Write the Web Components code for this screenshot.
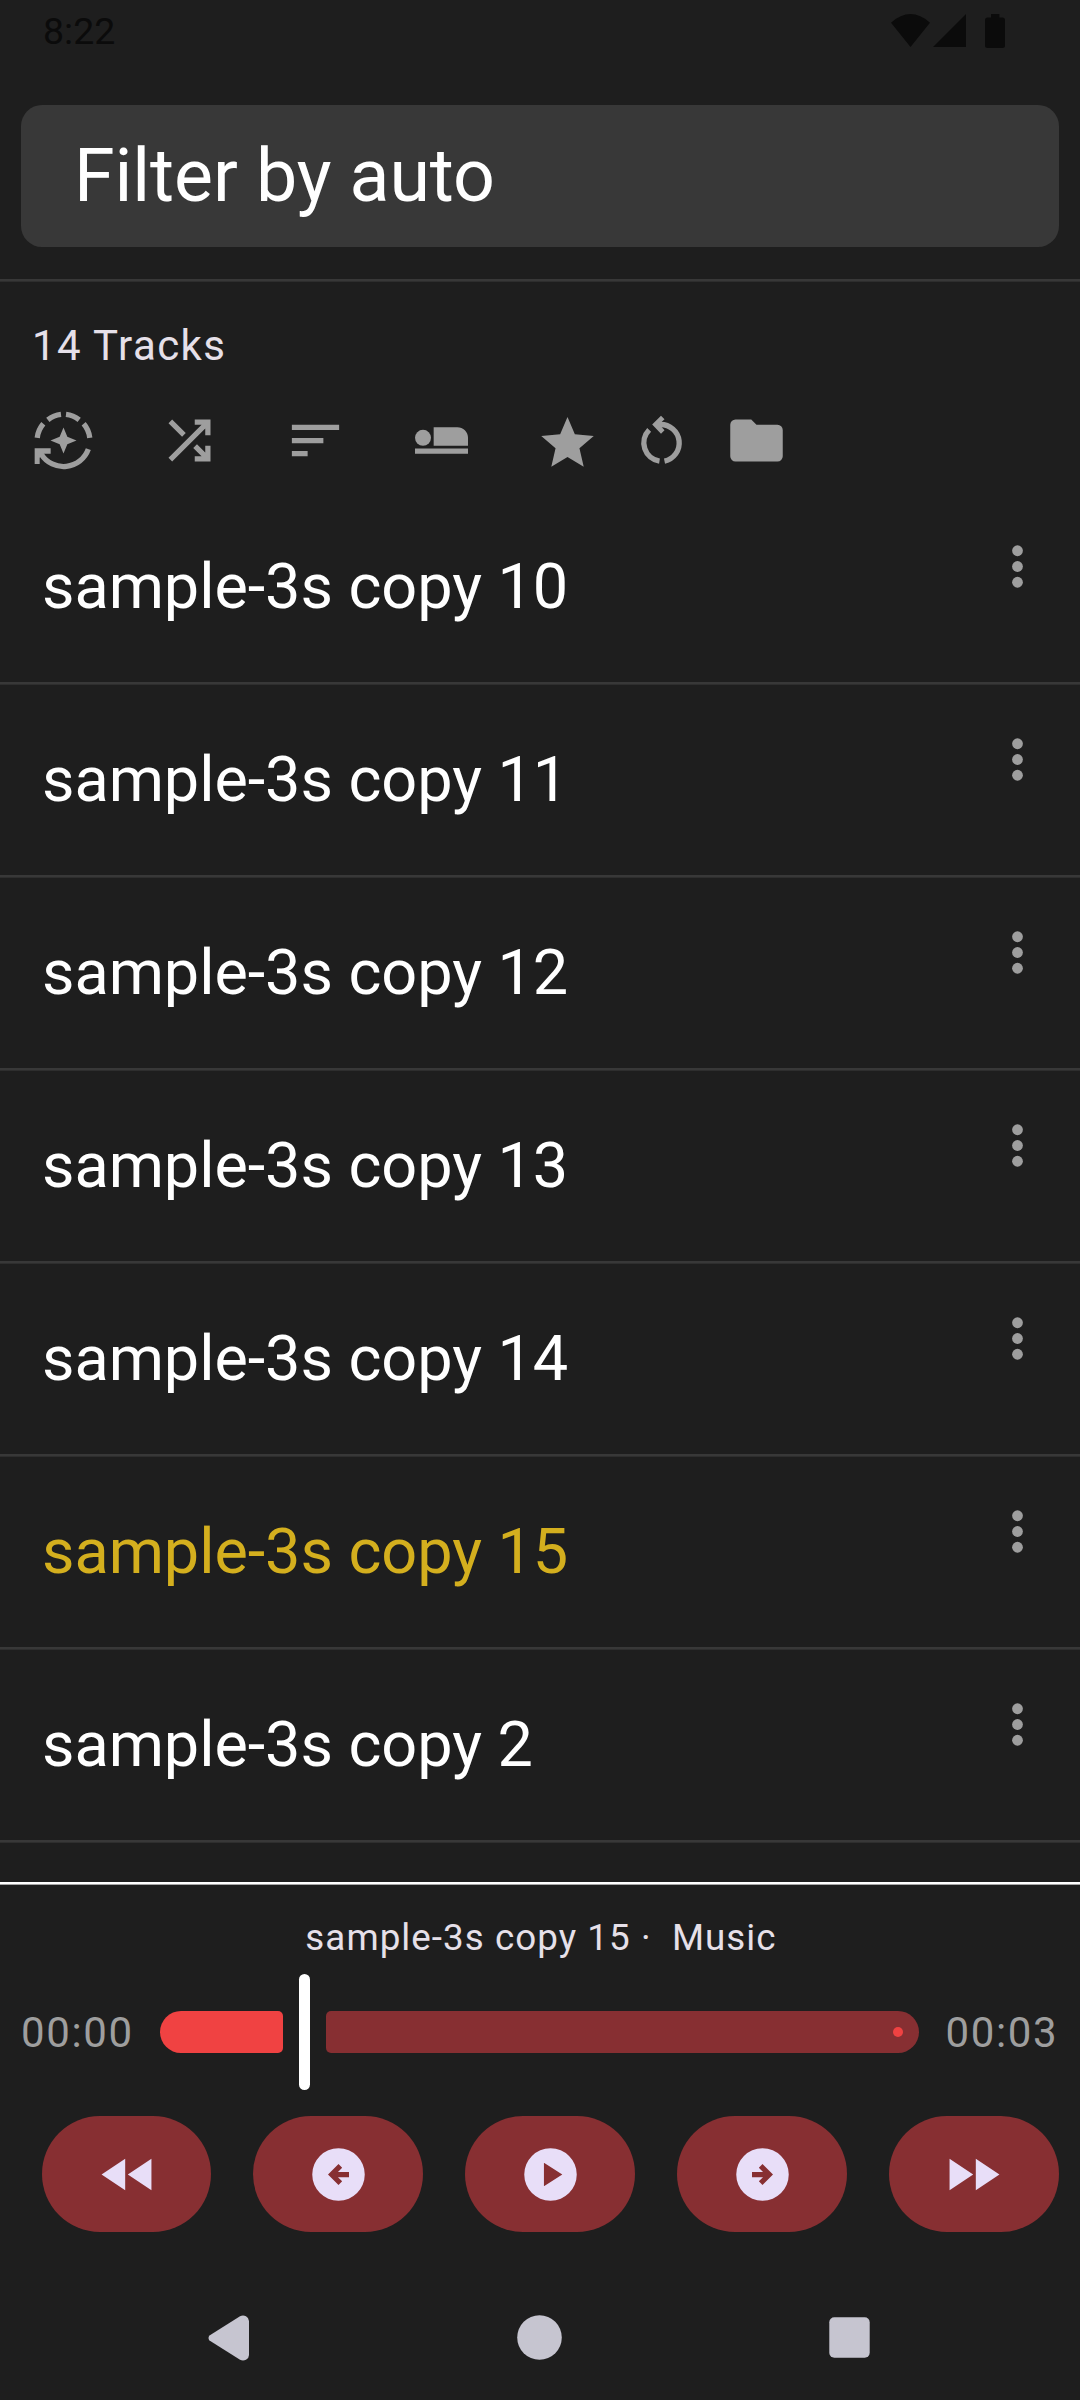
<!DOCTYPE html>
<html lang="en">
<head>
<meta charset="utf-8">
<title>Tracks</title>
<style>
html,body{margin:0;padding:0;background:#1e1e1e}
body{font-family:Roboto,sans-serif;color:#fff}
</style>
</head>
<body>
<music-app></music-app>
<script>
const define=(name,html,setup)=>{
  const t=document.createElement('template');
  t.innerHTML=html;
  customElements.define(name,class extends HTMLElement{
    constructor(){
      super();
      this.attachShadow({mode:'open'}).append(t.content.cloneNode(true));
    }
    connectedCallback(){ if(setup) setup(this,this.shadowRoot); }
  });
};

const S='0 -960 960 960';
const DISC='M480-80q-83 0-156-31.5T197-197q-54-54-85.5-127T80-480q0-83 31.5-156T197-763q54-54 127-85.5T480-880q83 0 156 31.5T763-763q54 54 85.5 127T880-480q0 83-31.5 156T763-197q-54 54-127 85.5T480-80Z';
const ICONS={
  auto:['96 327 189 189','<g fill="none" stroke="currentColor" stroke-width="16"><path d="M183 343.3A78.5 78.5 0 0 0 143.500 359.500M130 371.500A78.500 78.500 0 0 0 111.700 413.500M198 343.300A78.500 78.500 0 0 1 237.500 359.500M251 371.500A78.500 78.500 0 0 1 269.300 413.500M265 447.500A79 79 0 0 1 124 463"/></g><path d="M104 445H152V461H131L119 473V492H104ZM190.500 382.500 202 410 229.500 421.500 202 433 190.500 460.500 179 433 151.500 421.500 179 410Z"/>'],
  shuffle:[S,'<path d="M560-160v-80h104L537-367l57-57 126 126v-102h80v240H560Zm-344 0-56-56 504-504H560v-80h240v240h-80v-104L216-160Zm151-377L160-744l56-56 207 207-56 56Z"/>'],
  sort:[S,'<path d="M120-240v-80h240v80H120Zm0-200v-80h480v80H120Zm0-200v-80h720v80H120Z"/>'],
  bed:['30 87 189 189','<circle cx="69" cy="173.500" r="24"/><path d="M101 141.500H172A32 32 0 0 1 204 173.500V197.500H101ZM45 205.500H204V221H45Z"/>'],
  star:['0 -1000 960 960','<path d="m233-120 65-281L80-590l288-25 112-265 112 265 288 25-218 189 65 281-247-149-247 149Z"/>'],
  reset:['691.5 87 189 189','<g fill="none" stroke="currentColor" stroke-width="16"><path d="M777 243.300A55.500 55.500 0 0 1 746 149.500M792 243.300A55.500 55.500 0 0 0 779 133.500"/></g><path d="M755 133.500 781.500 107 792 118 784 125.500V141.500L792 150.500 781.500 161.500Z"/>'],
  folder:[S,'<path d="M160-160q-33 0-56.5-23.5T80-240v-480q0-33 23.5-56.5T160-800h240l80 80h320q33 0 56.5 23.5T880-640v400q0 33-23.5 56.5T800-160H160Z"/>'],
  more:[S,'<circle cx="480" cy="-240" r="82"/><circle cx="480" cy="-480" r="82"/><circle cx="480" cy="-720" r="82"/>'],
  rewind:[S,'<path d="M860-240 500-480l360-240v480Zm-400 0L100-480l360-240v480Z"/>'],
  forward:[S,'<path d="M100-240v-480l360 240-360 240Zm400 0v-480l360 240-360 240Z"/>'],
  prev:[S,'<path fill-rule="evenodd" d="'+DISC+'M480-320l56-56-64-64h168v-80H472l64-64-56-56-160 160 160 160Z"/>'],
  next:[S,'<path fill-rule="evenodd" d="'+DISC+'M480-320l160-160-160-160-56 56 64 64H320v80h168l-64 64 56 56Z"/>'],
  play:[S,'<path fill-rule="evenodd" d="'+DISC+'M380-300l280-180-280-180v360Z"/>']
};

define('app-icon',`<style>:host{display:block;width:63px;height:63px;flex:none}svg{display:block;width:100%;height:100%;fill:currentColor}</style><svg></svg>`,(el,root)=>{
  const [box,body]=ICONS[el.getAttribute('name')];
  const svg=root.querySelector('svg');
  svg.setAttribute('viewBox',box);
  svg.innerHTML=body;
});

define('app-divider',`<style>:host{display:block;height:3px;flex:none;background:linear-gradient(var(--line,#383838) 0 2px,var(--line-edge,#2e2e2e) 2px 3px)}</style>`);

define('status-bar',`<style>
:host{display:flex;justify-content:space-between;height:105px;box-sizing:border-box;padding:9px 75px 0 43px;color:#0b0b0b;flex:none}
time{font-size:37.5px;line-height:45px}
svg{display:block;margin-top:5px;fill:currentColor}
</style><time>8:22</time>
<svg width="114" height="34" viewBox="891 14 114 34"><path d="M891 22.700Q910.500 5.500 930 22.700L910.500 47ZM966 14V47H933ZM991 14H999.400V17.500H1002.500Q1005 17.500 1005 20V45.500Q1005 48 1002.500 48H987.500Q985 48 985 45.500V20Q985 17.500 987.500 17.500H991Z"/></svg>`);

define('search-field',`<style>
:host{display:flex;align-items:center;height:142px;margin:0 21px;padding-left:53px;border-radius:21px;background:#383838;font-size:73.5px;line-height:86px;letter-spacing:-.09px;box-sizing:border-box;flex:none}
</style><slot></slot>`);

define('icon-toolbar',`<style>
:host{display:flex;padding-left:32px;gap:63px;color:#9e9e9e;flex:none}
div{display:flex;gap:31.5px}
</style><app-icon name="auto"></app-icon><app-icon name="shuffle"></app-icon><app-icon name="sort"></app-icon><app-icon name="bed"></app-icon><div><app-icon name="star"></app-icon><app-icon name="reset"></app-icon><app-icon name="folder"></app-icon></div>`);

define('track-row',`<style>
:host{display:block;flex:none}
:host([active]) .name{color:#d4af1e}
.row{display:flex;height:190px;justify-content:space-between;box-sizing:border-box;padding:0 31px 0 42px}
.name{font-size:63px;line-height:189px;letter-spacing:-.07px;color:#fff}
app-icon{margin-top:43px;color:#9e9e9e}
</style><div class="row"><span class="name"><slot></slot></span><app-icon name="more"></app-icon></div><app-divider></app-divider>`);

define('seek-bar',`<style>
:host{display:flex;align-items:center;height:116px;flex:none;padding:0 21px;justify-content:space-between;color:#9e9e9e;font-size:42px;line-height:50px;letter-spacing:1.6px}
span{width:113.5px;padding-top:2px}
.track{display:flex;align-items:center;width:759px;margin:0 auto 0 25.5px}
.done{width:123px;height:42px;background:#f04242;border-radius:21px 5px 5px 21px}
.thumb{width:11px;height:116px;margin:0 15.500px 0 16px;background:#fff;border-radius:5.5px}
.rest{display:flex;flex:1;align-items:center;justify-content:flex-end;height:42px;padding-right:16px;box-sizing:border-box;background:#872f32;border-radius:5px 21px 21px 5px}
.stop{width:10.5px;height:10.5px;border-radius:50%;background:#f04242}
</style><span><slot name="elapsed"></slot></span><div class="track"><div class="done"></div><div class="thumb"></div><div class="rest"><div class="stop"></div></div></div><span><slot name="total"></slot></span>`);

define('pill-button',`<style>
:host{display:flex;flex:1;height:116px;align-items:center;justify-content:center;border-radius:58px;background:#872f32;color:#e8def8}
</style><slot></slot>`);

define('player-panel',`<style>
:host{display:flex;flex-direction:column;flex:none;height:388px}
app-divider{--line:#fff;--line-edge:#a5a5a5}
.title{font-size:36.75px;line-height:44px;letter-spacing:1.05px;color:#e6e0e9;text-align:center;white-space:pre;padding:31px 0 0 2px;height:58px}
.controls{display:flex;gap:42px;padding:26px 21px 0 42px}
pill-button:first-child{flex:0 0 169px}
</style><app-divider></app-divider>
<div class="title">sample-3s copy 15 ·  Music</div>
<seek-bar><span slot="elapsed">00:00</span><span slot="total">00:03</span></seek-bar>
<div class="controls"><pill-button><app-icon name="rewind"></app-icon></pill-button><pill-button><app-icon name="prev"></app-icon></pill-button><pill-button><app-icon name="play"></app-icon></pill-button><pill-button><app-icon name="next"></app-icon></pill-button><pill-button><app-icon name="forward"></app-icon></pill-button></div>`);

define('nav-bar',`<style>
:host{display:flex;justify-content:space-between;align-items:center;flex:none;height:130px;padding:5px 210px 0 208px;box-sizing:border-box;color:#c6c5d0}
svg{display:block;fill:currentColor}
</style>
<svg width="41" height="46" viewBox="0 0 41 46"><path d="M1.500 20.500 32 1.300Q35-.3 38 1.300 41 3 41 6V40Q41 43 38 44.700 35 46.300 32 44.700L1.500 25.500Q-.5 23 1.500 20.500Z"/></svg>
<svg width="45" height="45" viewBox="0 0 45 45"><circle cx="22.500" cy="22.500" r="22.300"/></svg>
<svg width="41" height="41" viewBox="0 0 41 41"><rect x=".3" y=".3" width="40.400" height="40.400" rx="5"/></svg>`);

define('music-app',`<style>
:host{display:flex;flex-direction:column;width:1080px;height:2400px;overflow:hidden;background:#1e1e1e}
.count{font-size:42px;line-height:50px;letter-spacing:1.43px;color:#e6e0e9;padding:39px 0 38px 32px}
search-field{margin-bottom:32px}
.list{flex:1;min-height:0;overflow:hidden;padding-top:20px;display:flex;flex-direction:column}
</style>
<status-bar></status-bar>
<search-field>Filter by auto</search-field>
<app-divider></app-divider>
<div class="count">14 Tracks</div>
<icon-toolbar></icon-toolbar>
<div class="list">
<track-row>sample-3s copy 10</track-row>
<track-row>sample-3s copy 11</track-row>
<track-row>sample-3s copy 12</track-row>
<track-row>sample-3s copy 13</track-row>
<track-row>sample-3s copy 14</track-row>
<track-row active>sample-3s copy 15</track-row>
<track-row>sample-3s copy 2</track-row>
</div>
<player-panel></player-panel>
<nav-bar></nav-bar>`);
</script>
</body>
</html>
